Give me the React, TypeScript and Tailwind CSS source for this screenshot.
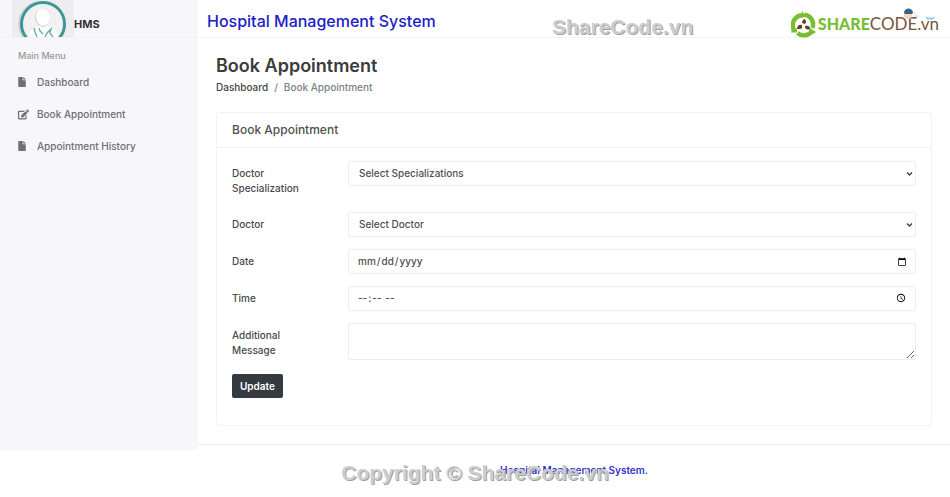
import { FaEdit, FaFile } from "react-icons/fa";

interface MenuItem {
  label: string;
  icon: typeof FaFile;
  iconSize: string;
}

interface SelectProps {
  id: string;
  placeholder: string;
}

const menuItems: MenuItem[] = [
  { label: "Dashboard", icon: FaFile, iconSize: "h-[10px] w-2" },
  { label: "Book Appointment", icon: FaEdit, iconSize: "size-[11px]" },
  { label: "Appointment History", icon: FaFile, iconSize: "h-[10px] w-2" },
];

const labelClass = "pt-[5px] pb-1 pr-6 text-[10px] leading-[15px] font-medium text-[#4a4a4a]";
const fieldClass =
  "block w-full rounded-[2px] border border-[#ededef] bg-white font-medium text-[#505050]";
const watermarkClass =
  "pointer-events-none absolute whitespace-nowrap font-['Liberation_Sans',sans-serif] text-[21px] leading-6 font-bold text-[#cdcdcd] [text-shadow:1px_1px_0_#a0a0a0]";

const DoctorLogo = () => (
  <svg width="62" height="37" viewBox="0 0 62 37" aria-hidden="true">
    <rect width="62" height="37" fill="#ededef" />
    <circle cx="29" cy="24" r="23" fill="#d2d4d6" />
    <circle cx="31" cy="24" r="21.5" fill="#f1f1f2" stroke="#3c9694" strokeWidth="3" />
    <path d="M17 37c0-6 3-9 11-11h6c8 2 12 5 12 11z" fill="#fff" />
    <path d="M23 17c0-5 3-8 8-8s7 3 7 8-3 10-7 10-8-5-8-10z" fill="#cfcfd1" />
    <path d="M24 16c0-5 3-7 7-7s7 3 7 8-3 9-7 9-7-5-7-10z" fill="#fff" />
    <path
      d="M22 28l1 4 2 5M27 28l1 3 3 3M40 28l-5 5-2 4M39 29l-1 4 3 4"
      fill="none"
      stroke="#65aaa9"
      strokeWidth="1.3"
    />
  </svg>
);

const ShareCodeLogo = () => (
  <div className="pointer-events-none absolute top-2 right-[11px] flex items-center font-['Lato',sans-serif] leading-8 whitespace-nowrap">
    <svg className="mr-px" width="26" height="27" viewBox="0 0 26 27" aria-hidden="true">
      <g fill="none" stroke="#78bd32" strokeWidth="4.4">
        <path d="M3 19A10 10 0 0 1 11 4.2" />
        <path d="M13.5 3.6A10 10 0 0 1 21.5 17" />
        <path d="M21.5 19.5A10 10 0 0 1 6.5 22" />
      </g>
      <path d="M11 0v7l4-2z" fill="#78bd32" />
      <path d="M0 21.5l1-3 5-1v4z" fill="#78bd32" />
      <path d="M19 17l6 4-3 2-4-4z" fill="#78bd32" />
      <path
        d="M13 8c3 1 2 4 1 5l-3-1c0-2 1-3 2-4zM6 18c0-3 2-5 5-4v3c-1 1-2 1-5 1zM14 15c3-1 5 0 5 3-2 1-5 1-5-3z"
        fill="#65401f"
      />
    </svg>
    <span className="text-[16px] font-black text-[#78bd32]">SHARE</span>
    <span className="text-[17px] text-[#79553c]">CODE.vn</span>
    <svg className="absolute top-0 right-0" width="46" height="16" viewBox="0 0 46 16" aria-hidden="true">
      <circle cx="15" cy="7" r="4" fill="#f5d5bd" />
      <path d="M11 5c0-6 9-6 9 0l-1 1h-7z" fill="#356486" />
      <path d="M22 4c-1 3 1 5 4 4" fill="none" stroke="#d9ebf5" strokeWidth="1.5" />
      <path d="M33 9l2 2 2-1 2 1 2-2" fill="none" stroke="#8bc9ef" strokeWidth="1.5" />
    </svg>
  </div>
);

const Sidebar = () => (
  <aside className="w-[198px] shrink-0 bg-[#f6f6fb]">
    <div className="flex h-[38px] items-start border-b border-[#f0f0f5] pl-3">
      <DoctorLogo />
      <span className="pt-4 text-[11px] leading-4 font-bold text-[#333]">HMS</span>
    </div>
    <nav className="px-[18px] pt-[10px]">
      <p className="text-[9px] leading-4 font-medium text-[#999]">Main Menu</p>
      <ul className="mt-[10px] flex flex-col gap-4">
        {menuItems.map(({ label, icon: Icon, iconSize }) => (
          <li key={label}>
            <a href="#" className="flex items-center text-[10px] leading-4 font-medium text-[#707070]">
              <span className="w-[19px]">
                <Icon className={iconSize} />
              </span>
              {label}
            </a>
          </li>
        ))}
      </ul>
    </nav>
  </aside>
);

const SelectField = ({ id, placeholder }: SelectProps) => (
  <div className="relative">
    <select id={id} className={`${fieldClass} h-[25px] appearance-none px-[10px] text-[10px]`}>
      <option>{placeholder}</option>
    </select>
    <svg
      className="pointer-events-none absolute top-[10px] right-[3px]"
      width="7"
      height="6"
      viewBox="0 0 7 6"
      aria-hidden="true"
    >
      <path d="M1 1.5l2.5 2.5L6 1.5" fill="none" stroke="#444" strokeWidth="1.5" />
    </svg>
  </div>
);

const AppointmentForm = () => (
  <form
    className="grid grid-cols-[116px_1fr] items-start gap-y-3 px-[15px] pt-[13px] pb-[27px]"
    onSubmit={(e) => e.preventDefault()}
  >
    <label htmlFor="specialization" className={labelClass}>
      Doctor Specialization
    </label>
    <SelectField id="specialization" placeholder="Select Specializations" />

    <label htmlFor="doctor" className={labelClass}>
      Doctor
    </label>
    <SelectField id="doctor" placeholder="Select Doctor" />

    <label htmlFor="date" className={labelClass}>
      Date
    </label>
    <input id="date" type="date" className={`${fieldClass} h-[25px] pr-[6px] pl-2 text-[10px]`} />

    <label htmlFor="time" className={labelClass}>
      Time
    </label>
    <input id="time" type="time" className={`${fieldClass} h-[25px] pr-[6px] pl-2 text-[10px]`} />

    <label htmlFor="message" className={labelClass}>
      Additional Message
    </label>
    <textarea id="message" className={`${fieldClass} h-[37px] px-2 py-1 text-[10px]`} />

    <button
      type="submit"
      className="h-6 justify-self-start rounded-[2px] bg-[#343a40] px-2 text-[10px] font-semibold text-white"
    >
      Update
    </button>
  </form>
);

const App = () => {
  return (
    <div className="relative min-h-screen bg-white font-['Inter',sans-serif]">
      <div className="flex">
        <Sidebar />
        <main className="min-w-0 grow">
          <header className="flex h-[38px] items-center border-b border-[#f4f4f6] px-[9px]">
            <p className="pt-1 text-[16px] leading-6 font-medium text-[#2020c8]">Hospital Management System</p>
          </header>
          <section className="px-[18px] pt-4">
            <h1 className="text-[18px] leading-6 font-semibold text-[#3b3b3b]">Book Appointment</h1>
            <nav aria-label="Breadcrumb" className="mt-px flex gap-[6px] text-[10px] leading-4 font-medium">
              <a href="#" className="text-[#444]">Dashboard</a>
              <span className="text-[#7a828a]">/</span>
              <span className="text-[#7a828a]">Book Appointment</span>
            </nav>
            <div className="mt-[17px] rounded-[3px] border border-[#f3f3f5]">
              <h2 className="border-b border-[#f3f3f5] px-[15px] py-[7px] text-[12px] leading-5 font-medium text-[#505050]">
                Book Appointment
              </h2>
              <AppointmentForm />
            </div>
          </section>
          <div className="mt-[18px] h-[6px] border-t border-[#ececee]" />
        </main>
      </div>
      <footer className="flex justify-center pt-3 pl-[198px]">
        <p className="text-[10px] leading-4 font-semibold text-[#3232c8]">Hospital Management System.</p>
      </footer>
      <span className={`${watermarkClass} top-[15px] left-[552px]`}>ShareCode.vn</span>
      <ShareCodeLogo />
      <span className={`${watermarkClass} top-[461px] left-1/2 -translate-x-1/2`}>Copyright © ShareCode.vn</span>
    </div>
  );
};

export default App;
